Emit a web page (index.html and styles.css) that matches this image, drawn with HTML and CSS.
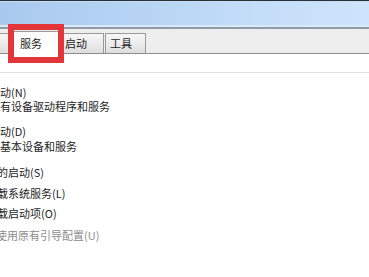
FILE: index.html
```html
<!DOCTYPE html>
<html lang="zh-CN">
<head>
<meta charset="utf-8">
<title>系统配置</title>
<link rel="stylesheet" href="styles.css">
</head>
<body>
<div class="window">
  <div class="titlebar"></div>
  <div class="titlesep"></div>
  <div class="tabstrip">
    <div class="tab tab-cut"></div>
    <div class="tab tab-active">服务</div>
    <div class="tab tab-start">启动</div>
    <div class="tab tab-tools">工具</div>
  </div>
  <div class="content">
    <div class="group">
      <div class="line l1"><span class="shift3">正常启动(N)</span></div>
      <div class="line l2"><span class="shift3">加载所有设备驱动程序和服务</span></div>
      <div class="line l3"><span class="shift3">诊断启动(D)</span></div>
      <div class="line l4"><span class="shift3">仅加载基本设备和服务</span></div>
      <div class="line l5"><span class="shift-sel">有选择的启动(S)</span></div>
      <div class="line l6"><span class="shift-chk">加载系统服务(L)</span></div>
      <div class="line l7"><span class="shift-chk">加载启动项(O)</span></div>
      <div class="line l8 disabled"><span class="shift-dis">使用原有引导配置(U)</span></div>
    </div>
  </div>
  <div class="highlight"></div>
</div>
</body>
</html>
```
FILE: styles.css
```css
html, body {
  margin: 0;
  padding: 0;
  background: #ffffff;
}
body {
  width: 369px;
  height: 277px;
  overflow: hidden;
  font-family: "Noto Sans CJK SC", "Liberation Sans", sans-serif;
  font-size: 11px;
  color: #1e1e1e;
}
.window {
  position: relative;
  width: 369px;
  height: 277px;
  overflow: hidden;
}
.titlebar {
  height: 24px;
  border-top: 1px solid #26313c;
  border-bottom: 2px solid #dce9f7;
  background: linear-gradient(to right, #a9c9ee 0%, #b9d6f5 45%, #c4ddf9 70%, #cde4fb 100%);
  box-shadow: inset 0 1px 0 #c9dcf0;
}
.titlesep {
  height: 2px;
  background: #8f9ba7;
}
.tabstrip {
  height: 24px;
  background: #eeeeee;
  border-bottom: 1px solid #8d8d8d;
  display: flex;
  align-items: flex-end;
}
.tab {
  box-sizing: border-box;
  height: 20px;
  border: 1px solid #9a9a9a;
  border-bottom: none;
  background: linear-gradient(to bottom, #f7f7f7 0%, #ececec 50%, #dedede 100%);
  line-height: 18px;
  padding-left: 4px;
  white-space: nowrap;
}
.tab-cut {
  width: 14px;
  border-left: none;
  padding: 0;
}
.tab-active {
  width: 46px;
  height: 23px;
  margin-bottom: -1px;
  margin-left: -1px;
  padding-left: 6px;
  padding-top: 2px;
  background: linear-gradient(to bottom, #fbfbfb 0%, #ffffff 100%);
  position: relative;
}
.tab-start {
  width: 45px;
  margin-left: 0;
  padding-left: 5px;
}
.tab-tools {
  width: 41px;
  margin-left: 1px;
  padding-left: 4px;
}
.content {
  height: 223px;
}
.group {
  margin-top: 18px;
  border-top: 1px solid #dedfe2;
  padding-top: 12px;
}
.line {
  height: 14px;
  line-height: 14px;
  white-space: nowrap;
  overflow: visible;
}
.l2 { margin-top: 0; }
.l3 { margin-top: 11px; }
.l4 { margin-top: 1px; }
.l5 { margin-top: 12px; }
.l6 { margin-top: 7px; }
.l7 { margin-top: 6px; }
.l8 { margin-top: 8px; }
.shift3 { display: inline-block; margin-left: -33px; }
.shift-sel { display: inline-block; margin-left: -36px; }
.shift-chk { display: inline-block; margin-left: -14px; }
.shift-dis { display: inline-block; margin-left: -4px; }
.disabled { color: #8c8c8c; }
.highlight {
  position: absolute;
  left: 8px;
  top: 24px;
  width: 44px;
  height: 27px;
  border: 6px solid #e2363a;
}
```
